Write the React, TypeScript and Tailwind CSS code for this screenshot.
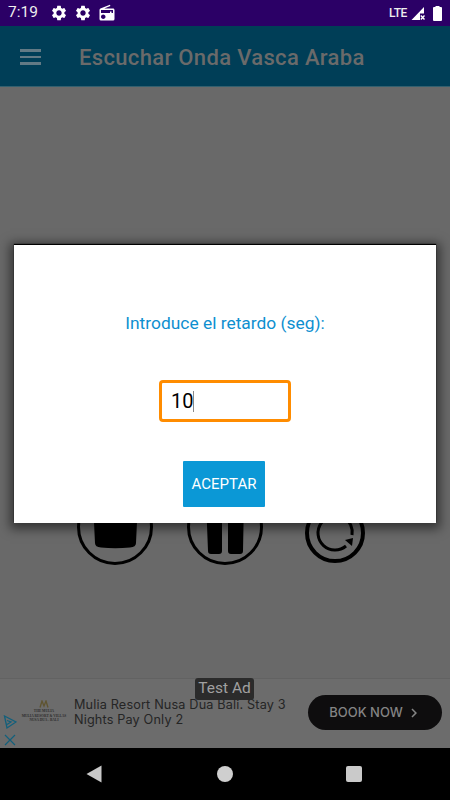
import React from "react";
import { MdSettings, MdRadio, MdChevronRight } from "react-icons/md";

const roboto = { fontFamily: "Roboto, sans-serif" };

function StatusBar() {
  return (
    <div className="flex h-[26px] shrink-0 items-center justify-between bg-[#2b0066] pl-[8px] pr-[8px] text-white">
      <div className="flex items-center">
        <span className="w-[42px] text-[15.5px] leading-none text-[#eeeeee]">7:19</span>
        <div className="flex items-center gap-[6px]">
          <MdSettings size={18} />
          <MdSettings size={18} />
          <MdRadio size={18} />
        </div>
      </div>
      <div className="flex items-center">
        <span className="text-[12px] font-medium leading-none tracking-[-0.4px] text-[#eeeeee]">LTE</span>
        <svg width="14" height="14" viewBox="0 0 14 14" className="ml-[4px]">
          <path d="M0.5 14 L13 1 V7.5 H9 V14 Z" fill="#fff" />
          <path d="M9.8 9.5 L13.5 13.5 M13.5 9.5 L9.8 13.5" stroke="#fff" strokeWidth="1.4" />
        </svg>
        <svg width="9" height="15" viewBox="0 0 9 15" className="ml-[8px]">
          <path d="M2.5 1 V0 H6.5 V1 H8 Q9 1 9 2 V14 Q9 15 8 15 H1 Q0 15 0 14 V2 Q0 1 1 1 Z" fill="#fff" />
        </svg>
      </div>
    </div>
  );
}

function Toolbar() {
  return (
    <div className="flex h-[61px] shrink-0 items-center border-b border-[#33606f] bg-[#003e57] pl-[20px]">
      <div className="mt-[2px] flex w-[21px] flex-col gap-[4px]">
        <div className="h-[2.5px] bg-[#627a85]" />
        <div className="h-[2.5px] bg-[#627a85]" />
        <div className="h-[2.5px] bg-[#627a85]" />
      </div>
      <span className="ml-[38px] mt-[3px] text-[22px] font-medium tracking-[0.34px] text-[#6a6a6a]">Escuchar Onda Vasca Araba</span>
    </div>
  );
}

function Controls() {
  return (
    <div className="flex items-start pb-[113px] pl-[77px]">
      <svg width="76" height="76" viewBox="0 0 76 76">
        <circle cx="38" cy="38" r="36.5" fill="none" stroke="#000" strokeWidth="3" />
        <path d="M16 12 H61 L59 54 Q59 58 53 58.5 Q38 60 24 58.5 Q18 58 18 54 Z" fill="#000" />
      </svg>
      <svg width="76" height="76" viewBox="0 0 76 76" className="ml-[34px]">
        <circle cx="38" cy="38" r="36.5" fill="none" stroke="#000" strokeWidth="3" />
        <path d="M19 10 H35 L35 62 Q35 65 32 65 H24 Q21 65 21 62 Z" fill="#000" />
        <path d="M41 10 H57 L56 62 Q56 65 53 65 H44 Q41 65 41 62 Z" fill="#000" />
      </svg>
      <svg width="60" height="60" viewBox="0 0 60 60" className="ml-[42px] mt-[14px]">
        <circle cx="30" cy="30" r="28" fill="none" stroke="#000" strokeWidth="4" />
        <path d="M41 43 A17 17 0 1 1 38 15" fill="none" stroke="#000" strokeWidth="3" />
        <path d="M39 14 A18 18 0 0 1 47 32" fill="none" stroke="#000" strokeWidth="3" />
        <path d="M40 37 L47 43 L48 35 Z" fill="#000" />
      </svg>
    </div>
  );
}

function Ad() {
  return (
    <div className="relative flex h-[70px] shrink-0 items-center border-t border-[#626262] bg-[#6c6c6c]">
      <div className="flex w-[24px] shrink-0 flex-col items-center self-end pb-[2px] pr-[4px]">
        <svg width="14" height="15" viewBox="0 0 14 15">
          <path d="M1.5 1 L13 7 L4 13 Z M4 5.5 L8 7 L4 9.5" fill="none" stroke="#12607c" strokeWidth="1.3" />
        </svg>
        <svg width="12" height="12" viewBox="0 0 12 12" className="mt-[4px]">
          <path d="M1 1 L11 11 M11 1 L1 11" stroke="#12607c" strokeWidth="1.2" />
        </svg>
      </div>
      <div className="mt-[-4px] flex w-[40px] shrink-0 flex-col items-center leading-none text-[#2c2c2c]">
        <svg width="10" height="8" viewBox="0 0 10 8">
          <path d="M1 7.5 L3 1 L5 6 L7 1 L9 7.5" fill="none" stroke="#5f5430" strokeWidth="1.3" />
        </svg>
        <span className="mt-[2px] text-[3.5px] font-bold" style={{ fontFamily: "'Liberation Serif', serif" }}>THE MULIA</span>
        <span className="mt-[1px] whitespace-nowrap text-[3.5px] font-bold" style={{ fontFamily: "'Liberation Serif', serif" }}>MULIA RESORT & VILLAS</span>
        <span className="mt-[1px] text-[3.5px] font-bold" style={{ fontFamily: "'Liberation Serif', serif" }}>NUSA DUA - BALI</span>
      </div>
      <div className="ml-[10px] mt-[-4px] w-[218px] shrink-0 text-[12.7px] leading-[15px] tracking-[0.15px] text-[#252525]" style={{ fontFamily: "Inter, sans-serif" }}>
        Mulia Resort Nusa Dua Bali. Stay 3 Nights Pay Only 2
      </div>
      <div className="absolute right-[8px] top-[16px] flex h-[35px] w-[134px] items-center justify-center rounded-full bg-[#0e0d0e] pl-[2px] text-[#848484]">
        <span className="text-[13px] font-medium" style={{ fontFamily: "Inter, sans-serif" }}>BOOK NOW</span>
        <MdChevronRight size={18} className="ml-[2px]" />
      </div>
      <div className="absolute left-[195px] top-[-1px] flex h-[22px] w-[59px] items-center justify-center rounded-[3px] bg-[#2b2b2b] text-[15.5px] text-[#a0a0a0]">
        Test Ad
      </div>
    </div>
  );
}

function NavBar() {
  return (
    <div className="flex h-[52px] shrink-0 items-center bg-black pl-[86px]">
      <svg width="16" height="18" viewBox="0 0 16 18">
        <path d="M0.5 9 L15.5 0.5 V17.5 Z" fill="#c9c9c9" />
      </svg>
      <div className="ml-[115px] h-[16px] w-[16px] rounded-full bg-[#cfcfcf]" />
      <div className="ml-[113px] h-[16px] w-[16px] rounded-[2px] bg-[#cacaca]" />
    </div>
  );
}

function Dialog() {
  return (
    <div className="absolute left-[14px] top-[245px] flex h-[278px] w-[422px] flex-col items-center bg-white shadow-[0_-1px_1px_0_#000,0_2px_10px_4px_rgba(0,0,0,0.5)]">
      <div className="mt-[67px] text-[17.4px] leading-[22px] text-[#0e8fd0]">Introduce el retardo (seg):</div>
      <div className="mt-[46px] flex h-[42px] w-[132px] items-center rounded-[4px] border-[3px] border-[#ff8c00] pl-[9px] text-[20px] text-black">
        10<span className="h-[21px] w-px bg-[#8a8a8a]" />
      </div>
      <div className="ml-[-2px] mt-[39px] flex h-[46px] w-[82px] items-center justify-center rounded-[1px] bg-[#0b98d6] text-[15px] text-white">
        ACEPTAR
      </div>
    </div>
  );
}

export default function App() {
  return (
    <div className="relative flex h-[800px] w-[450px] flex-col overflow-hidden bg-[#696969]" style={roboto}>
      <StatusBar />
      <Toolbar />
      <div className="flex flex-1 flex-col justify-end">
        <Controls />
      </div>
      <Ad />
      <NavBar />
      <Dialog />
    </div>
  );
}
